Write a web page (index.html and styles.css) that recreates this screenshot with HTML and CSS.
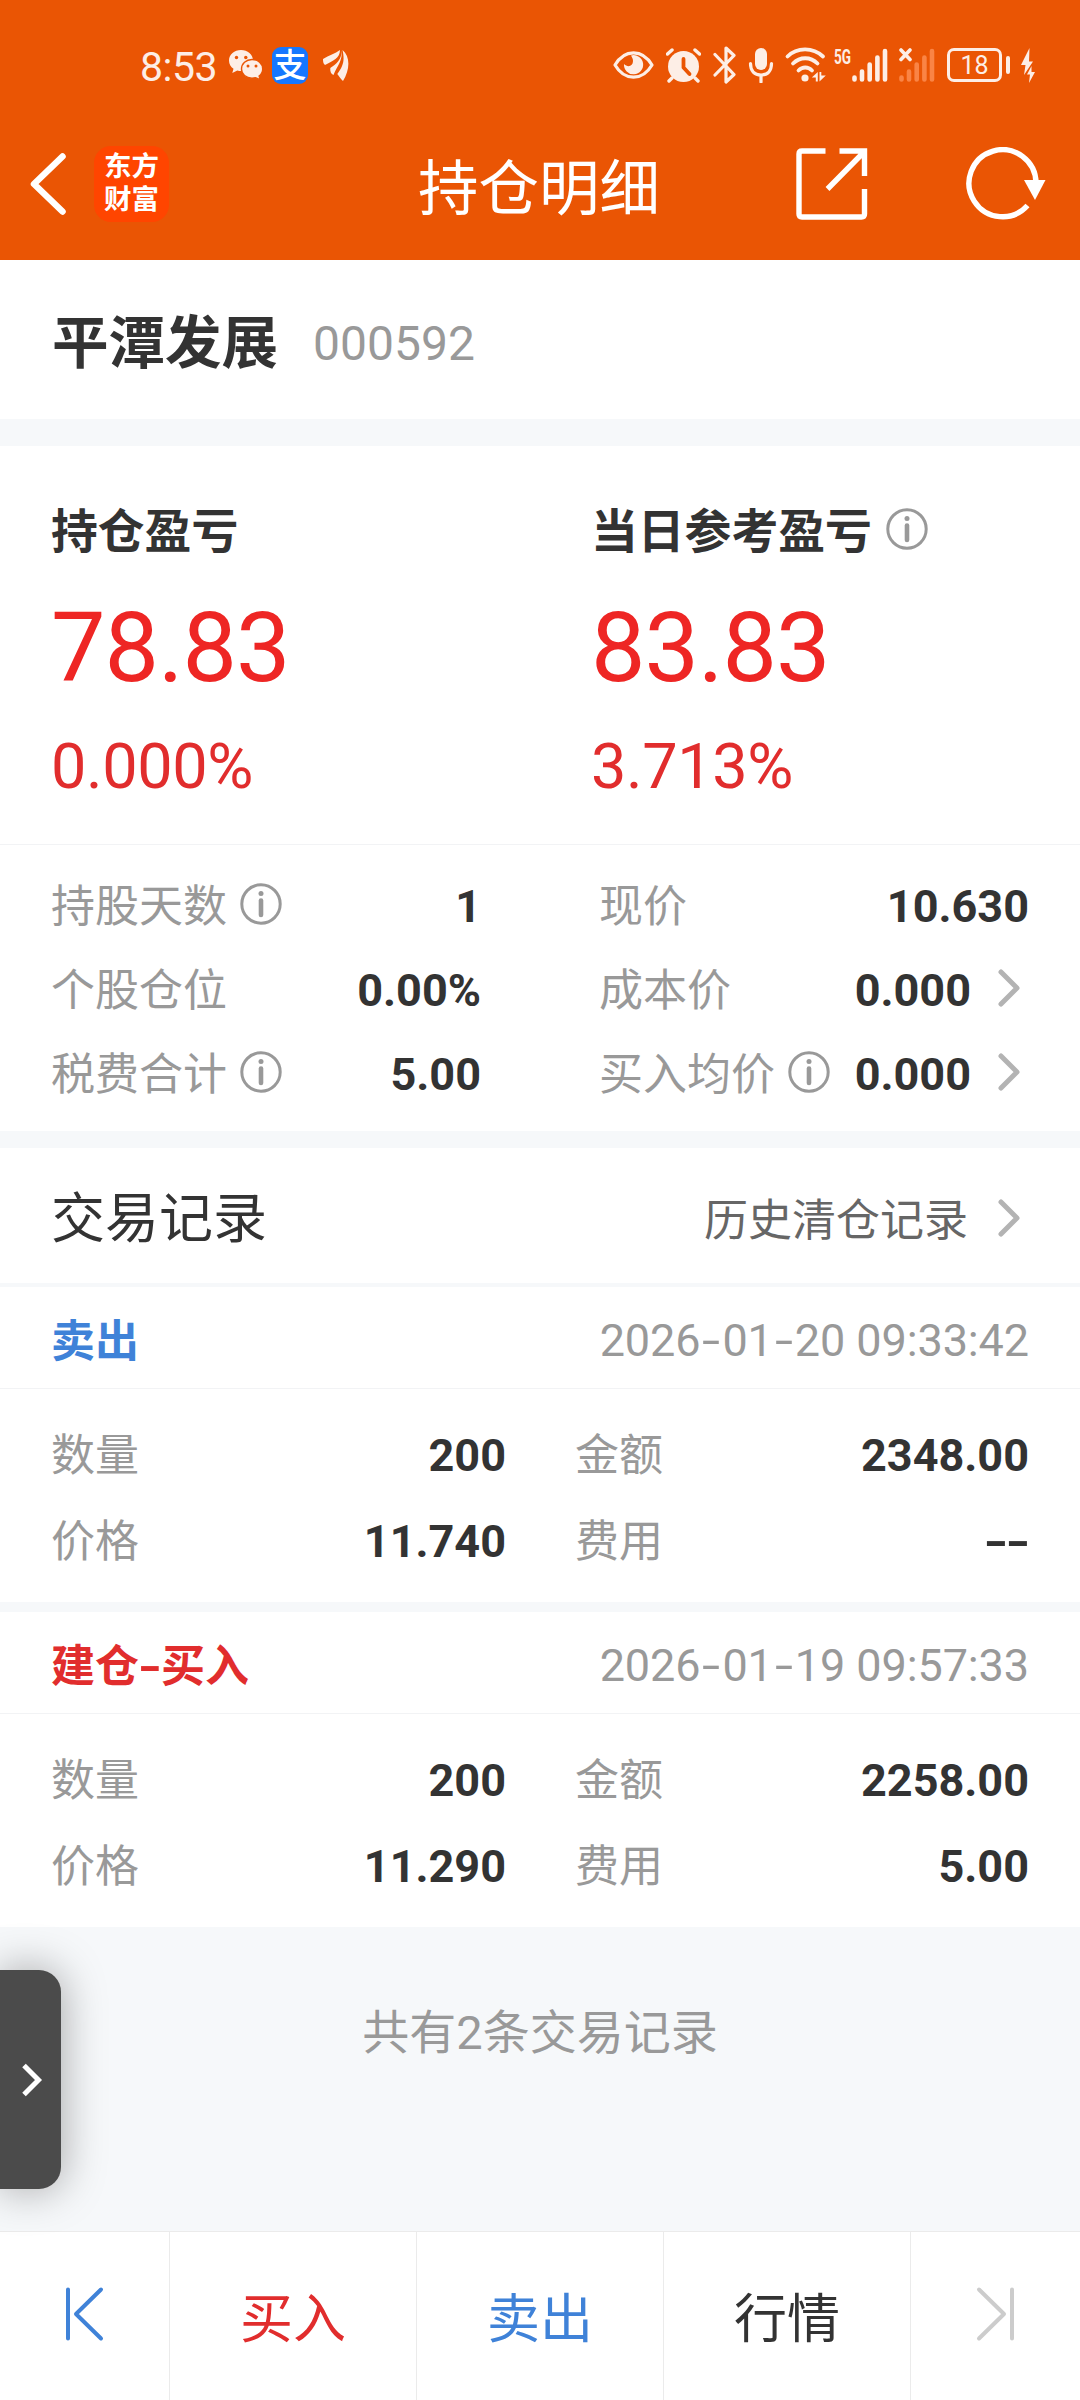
FILE: index.html
```html
<!DOCTYPE html>
<html lang="zh-CN">
<head>
    <meta charset="UTF-8">
    <meta name="viewport" content="width=device-width, initial-scale=1.0">
    <title>持仓明细</title>
    <link rel="stylesheet" href="styles.css">
</head>
<body>
    <!-- Shared icons -->
    <svg class="sprite" width="0" height="0">
        <symbol id="icon-info" viewBox="0 0 42 42">
            <circle cx="21" cy="21" r="19.2" fill="none" stroke="currentColor" stroke-width="3"/>
            <circle cx="21" cy="10.5" r="2.5" fill="currentColor"/>
            <path d="M21 17.5v14.5" stroke="currentColor" stroke-width="4.6" stroke-linecap="round"/>
        </symbol>
        <symbol id="icon-chevron" viewBox="0 0 22 38">
            <path d="M3 3l16 16L3 35" fill="none" stroke="currentColor" stroke-width="5" stroke-linecap="round" stroke-linejoin="round"/>
        </symbol>
    </svg>

    <div class="page">
        <header class="header">
            <div class="status-bar">
                <div class="status-left">
                    <span class="time">8:53</span>
                    <svg class="wechat" width="34" height="30" viewBox="0 0 34 30">
                        <path d="M12 0C5.400 0 0 4.600 0 10.500c0 3.400 1.700 6.300 4.500 8.300L3.300 23l5-2.600c1.300.4 2.500.5 3.700.5C18.600 20.900 24 16.400 24 10.500S18.600 0 12 0z" fill="#fdeee6"/>
                        <circle cx="7.500" cy="7.500" r="1.700" fill="#ea5504"/>
                        <circle cx="16.800" cy="7.500" r="1.700" fill="#ea5504"/>
                        <path d="M23 9.500c-6 0-10.500 4.100-10.500 9.400s4.500 9.300 10.500 9.300c1.300 0 2.500-.2 3.600-.5l4.600 2-1.100-3.700c2.200-1.700 3.600-4.200 3.600-7.100C33.700 13.600 29 9.500 23 9.500z" fill="#fdeee6" stroke="#ea5504" stroke-width="1.400"/>
                        <circle cx="19" cy="16" r="1.500" fill="#ea5504"/>
                        <circle cx="27" cy="16" r="1.500" fill="#ea5504"/>
                    </svg>
                    <span class="alipay">支</span>
                    <svg class="wing" width="26" height="32" viewBox="0 0 26 32" fill="#fdeee6">
                        <path d="M0 10C6 6 12 5 17 1c0 8-7 11-15 15-2-1.500-2-4-2-6z"/>
                        <path d="M18.500 1C20 12 14 17 10.500 26c-2.500-1-3.500-3.500-3.200-7C13 15 19 11 18.500 1z"/>
                        <path d="M19.500 1c8 7 7.500 19 .5 31-2-2-4-4.500-5.700-7C20 17 22 12 19.500 1z"/>
                    </svg>
                </div>
                <div class="status-right">
                    <!-- eye -->
                    <svg width="41" height="36" viewBox="0 0 41 36">
                        <path d="M2 18C7 9.500 13 5.800 20.500 5.800S34 9.500 39 18C34 26.500 28 30.200 20.500 30.200S7 26.500 2 18z" fill="none" stroke="currentColor" stroke-width="3.200" stroke-linejoin="round"/>
                        <path d="M18 8.500a9.600 9.600 0 1 1-7 8.500c4 4 9 2 9-3 0-2-.8-3.500-2-5.500z" fill="currentColor"/>
                    </svg>
                    <!-- alarm -->
                    <svg width="35" height="36" viewBox="0 0 35 36">
                        <circle cx="17.500" cy="19.500" r="15.500" fill="currentColor"/>
                        <path d="M1.500 7L6 3M33.500 7L29 3M6 31l-3 3M29 31l3 3" stroke="currentColor" stroke-width="3.400" stroke-linecap="round"/>
                        <path d="M17.500 12v8.500l6 6.500" fill="none" stroke="#ea5504" stroke-width="3.800" stroke-linecap="round" stroke-linejoin="round"/>
                    </svg>
                    <!-- bluetooth -->
                    <svg width="23" height="38" viewBox="0 0 23 38">
                        <path d="M2 8.500l19 20L13 36V2l8 7.500-19 19.500" fill="none" stroke="currentColor" stroke-width="3.200" stroke-linecap="round" stroke-linejoin="round"/>
                    </svg>
                    <!-- microphone -->
                    <svg width="26" height="36" viewBox="0 0 26 36">
                        <rect x="7" y="1" width="12" height="22" rx="6" fill="currentColor"/>
                        <path d="M2.500 16.500c0 7.500 4 11.500 10.500 11.500s10.500-4 10.500-11.500M13 28v7" fill="none" stroke="currentColor" stroke-width="3.200" stroke-linecap="round"/>
                    </svg>
                    <!-- wifi -->
                    <svg width="37" height="36" viewBox="0 0 37 36" overflow="visible">
                        <path d="M1.500 9.500C11 0 27 0 37 9.500M7 16.500c7-7 17.500-7 24.500 0M12.500 23.500c4-4 9.500-4 13.500 0" fill="none" stroke="currentColor" stroke-width="3.800" stroke-linecap="round"/>
                        <circle cx="19" cy="31" r="3.600" fill="currentColor"/>
                        <path d="M31.800 25v9.500h-2v-4h-4zM33.500 34.500V25h1.800v3.500h4.500z" fill="currentColor"/>
                    </svg>
                    <!-- sim 1 -->
                    <svg width="52" height="36" viewBox="0 0 52 36" overflow="visible">
                        <text class="net" x="-1" y="16.500" textLength="17" lengthAdjust="spacingAndGlyphs">5G</text>
                        <path d="M19.500 30.500v2M27 24.500v8M34.700 17.500v15M42.400 10.500v22M50 4v28.500" stroke="currentColor" stroke-width="4.600" stroke-linecap="round"/>
                    </svg>
                    <!-- sim 2, no signal -->
                    <svg width="36" height="36" viewBox="0 0 36 36">
                        <path d="M2.500 30.500v2M10 24.500v8M17.700 17.500v15M25.400 10.500v22M33 4v28.500" stroke="#fa8445" stroke-width="4.600" stroke-linecap="round"/>
                        <path d="M2 3l9 9.500M11 3l-9 9.500" stroke="currentColor" stroke-width="3.600" stroke-linecap="round"/>
                    </svg>
                    <div class="battery"><span class="battery-level">18</span></div>
                    <!-- charging -->
                    <svg width="14" height="36" viewBox="0 0 14 36" fill="currentColor">
                        <path d="M8.500 1L0 18h4.500L3 28l9-13.500H8z"/>
                        <path d="M10.500 19L6 27.500h3L8 36l6-11h-3.500z"/>
                    </svg>
                </div>
            </div>

            <div class="nav-bar">
                <svg class="back" width="40" height="64" viewBox="0 0 40 64">
                    <path d="M34.500 4.500L6 32l28.500 27.500" fill="none" stroke="#fff" stroke-width="6.500" stroke-linecap="round" stroke-linejoin="round"/>
                </svg>
                <div class="logo">东方<br>财富</div>
                <h1 class="nav-title">持仓明细</h1>
                <svg class="share" width="72" height="72" viewBox="0 0 72 72" fill="none" stroke="#fff" stroke-width="5.400">
                    <path d="M29.500 3H6Q3 3 3 6v60q0 3 3 3h59.500q3 0 3-3V41M43.500 3h25v25M68 4L31.500 41"/>
                </svg>
                <svg class="refresh" width="82" height="74" viewBox="0 0 82 74">
                    <path d="M70 36a33.500 33.500 0 1 0-8.500 22.500" fill="none" stroke="#fff" stroke-width="5.400"/>
                    <path d="M58 33h21.500L69 53z" fill="#fff"/>
                </svg>
            </div>
        </header>

        <div class="stock">
            <span class="stock-name">平潭发展</span>
            <span class="stock-code">000592</span>
        </div>

        <div class="profit">
            <div class="profit-item">
                <div class="profit-label">持仓盈亏</div>
                <div class="profit-amount">78.83</div>
                <div class="profit-rate">0.000%</div>
            </div>
            <div class="profit-item">
                <div class="profit-label">当日参考盈亏<svg class="info"><use href="#icon-info"/></svg></div>
                <div class="profit-amount">83.83</div>
                <div class="profit-rate">3.713%</div>
            </div>
        </div>

        <div class="detail">
            <div class="detail-col">
                <div class="row"><span class="label">持股天数</span><svg class="info"><use href="#icon-info"/></svg><span class="value">1</span></div>
                <div class="row"><span class="label">个股仓位</span><span class="value">0.00%</span></div>
                <div class="row"><span class="label">税费合计</span><svg class="info"><use href="#icon-info"/></svg><span class="value">5.00</span></div>
            </div>
            <div class="detail-col">
                <div class="row"><span class="label">现价</span><span class="value">10.630</span></div>
                <div class="row"><span class="label">成本价</span><span class="value">0.000</span><svg class="chevron"><use href="#icon-chevron"/></svg></div>
                <div class="row"><span class="label">买入均价</span><svg class="info"><use href="#icon-info"/></svg><span class="value">0.000</span><svg class="chevron"><use href="#icon-chevron"/></svg></div>
            </div>
        </div>

        <div class="trade-header">
            <h2 class="trade-title">交易记录</h2>
            <span class="history">历史清仓记录</span>
            <svg class="chevron"><use href="#icon-chevron"/></svg>
        </div>

        <div class="record">
            <div class="record-head">
                <span class="record-type sell">卖出</span>
                <span class="record-time">2026<i>-</i>01<i>-</i>20 09:33:42</span>
            </div>
            <div class="record-body">
                <div class="row"><span class="label">数量</span><span class="value">200</span></div>
                <div class="row"><span class="label">金额</span><span class="value">2348.00</span></div>
                <div class="row"><span class="label">价格</span><span class="value">11.740</span></div>
                <div class="row"><span class="label">费用</span><span class="value"><i>-</i><i>-</i></span></div>
            </div>
        </div>

        <div class="record">
            <div class="record-head">
                <span class="record-type buy">建仓<i>-</i>买入</span>
                <span class="record-time">2026<i>-</i>01<i>-</i>19 09:57:33</span>
            </div>
            <div class="record-body">
                <div class="row"><span class="label">数量</span><span class="value">200</span></div>
                <div class="row"><span class="label">金额</span><span class="value">2258.00</span></div>
                <div class="row"><span class="label">价格</span><span class="value">11.290</span></div>
                <div class="row"><span class="label">费用</span><span class="value">5.00</span></div>
            </div>
        </div>

        <div class="total">共有2条交易记录</div>

        <nav class="tab-bar">
            <div class="tab tab-icon">
                <svg width="40" height="56" viewBox="0 0 40 56" fill="none" stroke="#3f82d8" stroke-width="4" stroke-linecap="round" stroke-linejoin="round">
                    <path d="M3 3.500v49M36 3.500L11 28l25 24.500"/>
                </svg>
            </div>
            <div class="tab buy">买入</div>
            <div class="tab sell">卖出</div>
            <div class="tab">行情</div>
            <div class="tab tab-icon">
                <svg width="40" height="56" viewBox="0 0 40 56" fill="none" stroke="#ccc" stroke-width="4" stroke-linecap="round" stroke-linejoin="round">
                    <path d="M36 3.500v49M3 3.500L28 28 3 52.500"/>
                </svg>
            </div>
        </nav>

        <!-- Side drawer handle -->
        <div class="drawer">
            <svg width="22" height="36" viewBox="0 0 22 36">
                <path d="M3 3.500L17.500 18 3 32.500" fill="none" stroke="#fff" stroke-width="5"/>
            </svg>
        </div>
    </div>
</body>
</html>
```
FILE: styles.css
```css
:root {
    --theme: #ea5504;
    --red: #e12d2d;
    --blue: #3f82d8;
    --dark: #333;
    --gray: #999;
    --bg: #f6f8fa;
}

* {
    margin: 0;
    padding: 0;
    box-sizing: border-box;
}

body {
    background-color: var(--bg);
    color: var(--dark);
    font-family: Roboto, 'Noto Sans CJK SC', sans-serif;
}

/* Wide hyphen */
i {
    display: inline-block;
    width: 22px;
    font-style: normal;
    text-align: center;
    transform: scaleX(1.45);
}

.sprite {
    position: absolute;
}

.page {
    position: relative;
    display: flex;
    flex-direction: column;
    width: 1080px;
    height: 2400px;
    overflow: hidden;
}

/* Header */
.header {
    height: 260px;
    background-color: var(--theme);
}

.status-bar {
    display: flex;
    justify-content: space-between;
    height: 134px;
    padding: 0 45px 4px 140px;
    color: #fdeee6;
}

.status-left,
.status-right {
    display: flex;
    align-items: center;
}

.status-right {
    gap: 12px;
}

.time {
    width: 89px;
    padding-top: 4px;
    font-size: 41px;
    line-height: 48px;
    letter-spacing: -0.5px;
}

.alipay {
    width: 36px;
    height: 37px;
    margin: 0 15px 0 9px;
    border-radius: 9px;
    background-color: #1677ff;
    color: #fff;
    font-size: 33px;
    font-weight: 500;
    line-height: 37px;
    text-align: center;
}

.net {
    font-size: 20px;
    font-weight: bold;
    fill: currentColor;
}

.battery {
    position: relative;
    width: 62px;
    height: 34px;
}

.battery-level {
    display: block;
    width: 55px;
    height: 34px;
    border: 3px solid currentColor;
    border-radius: 7px;
    font-size: 25px;
    line-height: 29px;
    text-align: center;
}

.battery::after {
    content: '';
    position: absolute;
    top: 8px;
    right: -1px;
    width: 4px;
    height: 18px;
    border-radius: 2px;
    background-color: currentColor;
}

.nav-bar {
    display: flex;
    align-items: center;
    height: 100px;
    padding: 0 32px 0 28px;
}

.logo {
    width: 75px;
    height: 76px;
    margin-left: 26px;
    padding-top: 4px;
    border-radius: 17px;
    background-color: #ff4500;
    color: #fff;
    font-size: 27.500px;
    font-weight: bold;
    line-height: 33px;
    text-align: center;
}

.nav-title {
    flex: 1;
    padding: 12px 0 0 249px;
    color: #fff;
    font-size: 60.500px;
    font-weight: normal;
    line-height: 80px;
}

.refresh {
    margin-left: 98px;
}

/* Stock name */
.stock {
    display: flex;
    align-items: center;
    height: 159px;
    padding: 8px 52px 0;
    background-color: #fff;
    line-height: 80px;
}

.stock-name {
    padding-top: 1px;
    font-size: 56.500px;
    font-weight: bold;
}

.stock-code {
    margin-left: 35px;
    color: var(--gray);
    font-size: 48px;
}

/* Profit */
.profit {
    display: grid;
    grid-template-columns: 1fr 1fr;
    height: 399px;
    margin-top: 27px;
    padding-top: 50px;
    border-bottom: 1px solid #f2f3f5;
    background-color: #fff;
}

.profit-item {
    padding-left: 51px;
}

.profit-label {
    display: flex;
    align-items: center;
    font-size: 46.800px;
    font-weight: bold;
    line-height: 72px;
}

.info {
    width: 42px;
    height: 42px;
    margin: -6px 0 0 13px;
    color: var(--gray);
}

.profit-label .info {
    margin-left: 14px;
}

.profit-amount {
    margin-top: 20px;
    color: #ee2624;
    font-size: 97px;
    line-height: 120px;
    letter-spacing: -1px;
}

.profit-rate {
    margin-top: 19px;
    color: var(--red);
    font-size: 63px;
    line-height: 80px;
    letter-spacing: -0.4px;
}

/* Position details */
.detail {
    display: flex;
    height: 286px;
    padding: 20px 51px 0;
    background-color: #fff;
}

.detail-col {
    width: 430px;
}

.detail-col + .detail-col {
    margin-left: 118px;
}

.row {
    display: flex;
    align-items: center;
    height: 84px;
    font-size: 44px;
    line-height: 60px;
}

.label {
    color: var(--gray);
}

.value {
    margin-left: auto;
    font-size: 45px;
    font-weight: bold;
}

.chevron {
    width: 22px;
    height: 38px;
    margin: -6px 9px 0 27px;
    color: #b3b3b3;
}

/* Trade records */
.trade-header {
    display: flex;
    align-items: center;
    height: 135px;
    margin: 17px 0 4px;
    padding: 9px 51px 0;
    background-color: #fff;
    line-height: 80px;
}

.trade-title {
    flex: 1;
    font-size: 54px;
    font-weight: normal;
}

.history {
    padding-top: 2px;
    color: #666;
    font-size: 44px;
}

.trade-header .chevron {
    margin: -5px 9px 0 30px;
}

.record {
    background-color: #fff;
}

.record + .record {
    margin-top: 10px;
}

.record-head {
    display: flex;
    justify-content: space-between;
    align-items: center;
    height: 102px;
    padding: 7px 51px 0;
    border-bottom: 1px solid #f2f3f5;
    line-height: 60px;
}

.record-type {
    padding-top: 1px;
    font-size: 44px;
    font-weight: bold;
}

.record-time {
    color: var(--gray);
    font-size: 45px;
    letter-spacing: -0.1px;
}

.record-body {
    display: grid;
    grid-template-columns: 455px 454px;
    align-content: start;
    justify-content: space-between;
    height: 213px;
    padding: 24px 51px 0;
}

.record-body .row {
    height: 86px;
}

.buy {
    color: var(--red);
}

.sell {
    color: var(--blue);
}

.total {
    flex: 1;
    padding-top: 74px;
    color: var(--gray);
    font-size: 47px;
    line-height: 64px;
    text-align: center;
}

/* Bottom bar */
.tab-bar {
    display: flex;
    height: 169px;
    border-top: 1px solid #ebebeb;
    background-color: #fff;
}

.tab {
    flex: 1;
    padding-top: 4px;
    border-right: 1px solid #ebebeb;
    font-size: 53px;
    line-height: 168px;
    text-align: center;
}

.tab-icon {
    display: flex;
    flex: 0 0 170px;
    align-items: center;
    justify-content: center;
    padding: 0 0 5px;
}

.tab-icon:last-child {
    flex-basis: 169px;
    border-right: none;
}

.drawer {
    position: absolute;
    top: 1970px;
    left: 0;
    display: flex;
    align-items: center;
    width: 61px;
    height: 219px;
    padding-left: 21px;
    border-radius: 0 22px 22px 0;
    background-color: #4b4b4b;
    box-shadow: 0 0 44px rgba(0, 0, 0, 0.35);
}
```
